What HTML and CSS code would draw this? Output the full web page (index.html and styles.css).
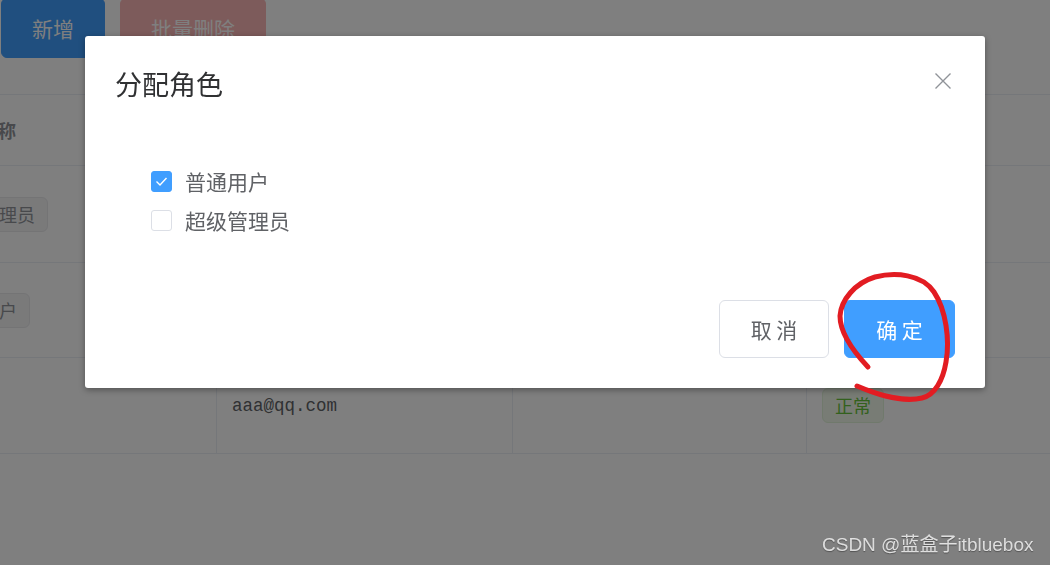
FILE: index.html
```html
<!DOCTYPE html>
<html>
	<head>
		<meta charset="utf-8"/>
		<title>分配角色</title>
		<link rel="stylesheet" href="styles.css">
	</head>
	<body>
		<div class="page">
			<div class="toolbar">
				<button class="btn btn-primary">新增</button>
				<button class="btn btn-danger is-disabled">批量删除</button>
			</div>

			<div class="grid">
				<div class="row row-head">
					<div class="cell cell-head">角色名称</div>
					<div class="cell cell-head">邮箱</div>
					<div class="cell cell-head">手机号</div>
					<div class="cell cell-head">状态</div>
				</div>
				<div class="row row-1">
					<div class="cell"><span class="tag">超级管理员</span></div>
					<div class="cell"></div>
					<div class="cell"></div>
					<div class="cell"></div>
				</div>
				<div class="row row-2">
					<div class="cell"><span class="tag">普通用户</span></div>
					<div class="cell"></div>
					<div class="cell"></div>
					<div class="cell"></div>
				</div>
				<div class="row row-3">
					<div class="cell"></div>
					<div class="cell mono">aaa@qq.com</div>
					<div class="cell"></div>
					<div class="cell"><span class="tag tag-success">正常</span></div>
				</div>
			</div>
		</div>

		<div class="mask"></div>

		<div class="dialog">
			<div class="dialog-header">
				<span class="dialog-title">分配角色</span>
				<svg class="dialog-close" width="16" height="16" viewBox="0 0 16 16">
					<path d="M0.5 0.5 L15.5 15.5 M15.5 0.5 L0.5 15.5" stroke="#909399" stroke-width="1.4" fill="none"/>
				</svg>
			</div>
			<div class="dialog-body">
				<div class="role-list">
					<label class="check is-checked">
						<span class="check-box">
							<svg width="21" height="21" viewBox="0 0 21 21">
								<path d="M5.5 10.5 L9 14 L15.5 7" stroke="#fff" stroke-width="1.4" fill="none"/>
							</svg>
						</span>
						<span class="check-label">普通用户</span>
					</label>
					<label class="check">
						<span class="check-box"></span>
						<span class="check-label">超级管理员</span>
					</label>
				</div>
			</div>
			<div class="dialog-footer">
				<button class="btn btn-default">取 消</button>
				<button class="btn btn-primary">确 定</button>
			</div>
		</div>

		<svg class="scribble" width="1050" height="565" viewBox="0 0 1050 565">
			<path d="M868,367 C852,350 840,332 840,316 C841,300 855,283 875,277 C895,272 922,274 934,292 C946,310 950,340 946,362 C943,380 935,395 922,398 C905,402 880,396 857,386"
				stroke="#e21c22" stroke-width="5" fill="none" stroke-linecap="round" stroke-linejoin="round"/>
		</svg>

		<div class="watermark">CSDN @蓝盒子itbluebox</div>
	</body>
</html>
```

FILE: styles.css
```css
html, body {
	margin: 0;
	background: #fff;
	font-family: "Noto Sans CJK SC", "Liberation Sans", sans-serif;
	overflow: hidden;
}
.page {
	width: 1050px;
	height: 565px;
}
.toolbar {
	display: flex;
	gap: 15px;
	margin-top: -2px;
	padding-left: 1px;
	height: 60px;
}
.btn {
	font-family: "Noto Sans CJK SC", sans-serif;
	font-size: 21px;
	line-height: 1;
	border-radius: 6px;
	border: 1px solid transparent;
	padding: 0 30px;
	height: 60px;
	cursor: pointer;
}
.btn-primary {
	background: #409eff;
	border-color: #409eff;
	color: #fff;
}
.btn-danger.is-disabled {
	background: #fab6b6;
	border-color: #fab6b6;
	color: #fff;
}
.btn-default {
	background: #fff;
	border-color: #dcdfe6;
	color: #606266;
}

/* table behind the mask */
.grid {
	margin-top: 36px;
	margin-left: -83px;
	width: 1200px;
	border-top: 1px solid #ebeef5;
}
.row {
	display: grid;
	grid-template-columns: 300px 296px 294px 1fr;
	border-bottom: 1px solid #ebeef5;
	box-sizing: border-box;
}
.row-head { height: 71px; }
.row-1 { height: 97px; }
.row-2 { height: 95px; }
.row-3 { height: 96px; }
.cell {
	display: flex;
	align-items: center;
	padding: 0 15px;
	border-right: 1px solid #ebeef5;
	color: #606266;
	font-size: 18px;
}
.cell-head {
	padding-left: 27px;
	font-weight: bold;
	color: #909399;
}
.mono {
	font-family: "Liberation Mono", monospace;
	font-size: 17.5px;
}
.tag {
	display: inline-block;
	height: 35px;
	line-height: 33px;
	padding: 0 12px;
	font-size: 18px;
	border-radius: 6px;
	border: 1px solid #e9e9eb;
	background: #f4f4f5;
	color: #909399;
	box-sizing: border-box;
}
.tag-success {
	border-color: #e1f3d8;
	background: #f0f9eb;
	color: #67c23a;
}

.mask {
	position: fixed;
	inset: 0;
	background: rgba(0, 0, 0, 0.5);
}

/* dialog */
.dialog {
	position: absolute;
	left: 85px;
	top: 36px;
	width: 900px;
	background: #fff;
	border-radius: 3px;
	box-shadow: 0 2px 6px rgba(0, 0, 0, 0.35);
}
.dialog-header {
	position: relative;
	padding: 30px 30px 15px;
}
.dialog-title {
	display: block;
	font-size: 27px;
	line-height: 36px;
	color: #303133;
}
.dialog-close {
	position: absolute;
	top: 37px;
	right: 34px;
}
.dialog-body {
	padding: 45px 30px;
}
.role-list {
	padding-left: 36px;
}
.check {
	display: flex;
	align-items: center;
	gap: 13px;
	height: 39px;
	cursor: pointer;
}
.check-box {
	width: 21px;
	height: 21px;
	box-sizing: border-box;
	border: 1px solid #dcdfe6;
	border-radius: 3px;
	background: #fff;
	display: flex;
}
.check-box svg {
	margin: -1px;
}
.is-checked .check-box {
	background: #409eff;
	border-color: #409eff;
}
.check-label {
	font-size: 21px;
	color: #606266;
	line-height: 1;
}
.dialog-footer {
	display: flex;
	justify-content: flex-end;
	gap: 15px;
	padding: 15px 30px 30px;
}
.dialog-footer .btn {
	height: 58px;
	width: 110px;
	padding: 0;
}
.dialog-footer .btn-primary {
	width: 111px;
}

.scribble {
	position: absolute;
	left: 0;
	top: 0;
	pointer-events: none;
}
.watermark {
	position: absolute;
	left: 822px;
	top: 533px;
	font-family: "Liberation Sans", "Noto Sans CJK SC", sans-serif;
	font-size: 19px;
	line-height: 24px;
	color: rgba(255, 255, 255, 0.78);
	text-shadow: 0 1px 1px rgba(0, 0, 0, 0.35);
	white-space: nowrap;
}
```
